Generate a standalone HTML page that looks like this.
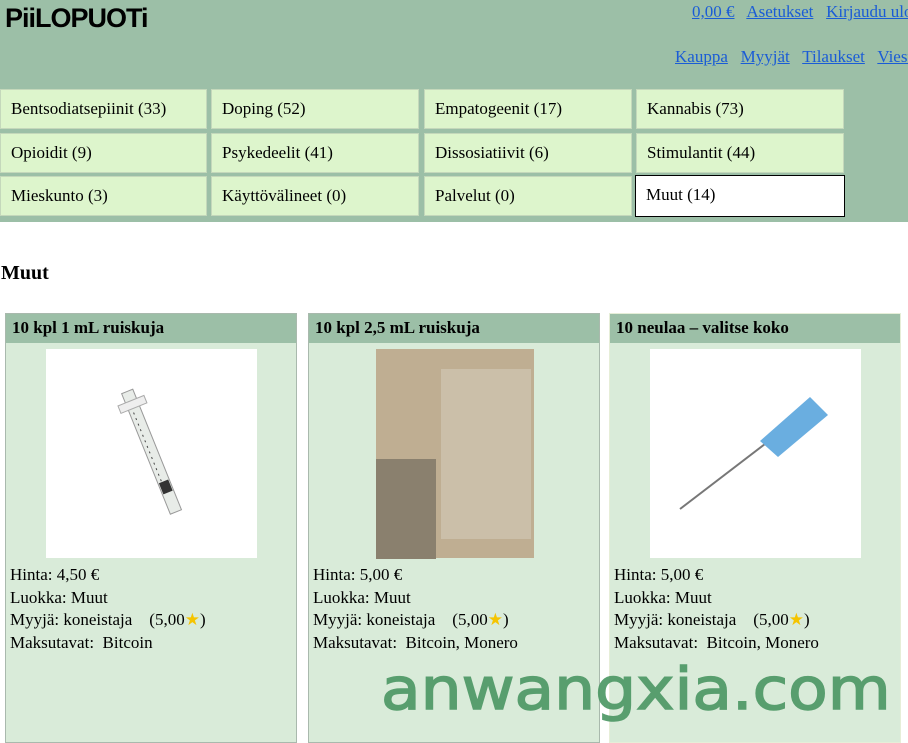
<!DOCTYPE html>
<html><head><meta charset="utf-8"><style>
body{margin:0;width:908px;height:733px;overflow:hidden;background:#fff;font-family:"Liberation Serif",serif;font-size:17px;color:#000;position:relative}
.hdr{position:absolute;left:0;top:0;width:908px;height:222px;background:#9cbfa7}
.logo{position:absolute;left:5px;top:3px;font-family:"Liberation Sans",sans-serif;font-weight:bold;font-size:27px;letter-spacing:-1px}
a{color:#1a5cd6;text-decoration:underline}
.top{position:absolute;top:2px;left:692px;white-space:nowrap;font-size:17px}
.nav{position:absolute;top:47px;left:675px;white-space:nowrap;font-size:17px}
.cat{position:absolute;background:#ddf5cc;border:1px solid #c4d8bb;box-sizing:border-box;height:40px;line-height:38px;padding-left:10px;width:208px}
.sel{background:#fff;border:1px solid #000}
h2{position:absolute;left:1px;top:262px;margin:0;font-size:20px}
.card{position:absolute;top:313px;width:292px;height:430px;background:#d9ebd9;border:1px solid #a9b9ad;box-sizing:border-box}
.ch{height:29px;background:#9cbfa7;font-weight:bold;line-height:28px;padding-left:6px}
.img{position:absolute;top:35px;left:40px;width:211px;height:209px;background:#fff}
.info{position:absolute;top:250px;left:4px;line-height:22.5px}
.wm{position:absolute;left:381px;top:655px;font-family:"DejaVu Sans",sans-serif;font-size:58px;color:#4e9866;-webkit-text-stroke:1.5px #4e9866;transform:scaleX(1.115);transform-origin:left;opacity:.92;white-space:nowrap}
</style></head><body>
<div class="hdr">
<div class="logo">PiiLOPUOTi</div>
<div class="top"><a>0,00 €</a>&nbsp;&nbsp; <a>Asetukset</a>&nbsp;&nbsp; <a>Kirjaudu ulos</a></div>
<div class="nav"><a>Kauppa</a>&nbsp;&nbsp; <a>Myyjät</a>&nbsp;&nbsp; <a>Tilaukset</a>&nbsp;&nbsp; <a>Viestit</a></div>
</div>
<div class="cat" style="left:0;top:89px;width:207px">Bentsodiatsepiinit (33)</div>
<div class="cat" style="left:211px;top:89px">Doping (52)</div>
<div class="cat" style="left:424px;top:89px">Empatogeenit (17)</div>
<div class="cat" style="left:636px;top:89px">Kannabis (73)</div>
<div class="cat" style="left:0;top:133px;width:207px">Opioidit (9)</div>
<div class="cat" style="left:211px;top:133px">Psykedeelit (41)</div>
<div class="cat" style="left:424px;top:133px">Dissosiatiivit (6)</div>
<div class="cat" style="left:636px;top:133px">Stimulantit (44)</div>
<div class="cat" style="left:0;top:176px;width:207px">Mieskunto (3)</div>
<div class="cat" style="left:211px;top:176px">Käyttövälineet (0)</div>
<div class="cat" style="left:424px;top:176px">Palvelut (0)</div>
<div class="cat sel" style="left:635px;top:175px;height:42px;width:210px">Muut (14)</div>
<h2>Muut</h2>
<div class="card" style="left:5px"><div class="ch">10 kpl 1 mL ruiskuja</div>
<div class="img"><svg width="211" height="209"><g transform="rotate(-22 105 104)"><rect x="100" y="38" width="12" height="130" fill="#e8ece8" stroke="#999"/><rect x="92" y="48" width="28" height="8" fill="#eee" stroke="#aaa"/><rect x="101" y="135" width="10" height="12" fill="#333"/><line x1="104" y1="60" x2="104" y2="135" stroke="#444" stroke-dasharray="2 4"/></g></svg></div>
<div class="info">Hinta: 4,50 €<br>Luokka: Muut<br>Myyjä: koneistaja &nbsp;&nbsp; (5,00<span style="color:#f5c400">★</span>)<br>Maksutavat:&nbsp; Bitcoin</div></div>
<div class="card" style="left:308px"><div class="ch">10 kpl 2,5 mL ruiskuja</div>
<div class="img" style="left:67px;width:158px;background:#bfae92"><div style="position:absolute;left:0;top:110px;width:60px;height:100px;background:#8a806e"></div><div style="position:absolute;left:65px;top:20px;width:90px;height:170px;background:#cbbfa9"></div></div>
<div class="info">Hinta: 5,00 €<br>Luokka: Muut<br>Myyjä: koneistaja &nbsp;&nbsp; (5,00<span style="color:#f5c400">★</span>)<br>Maksutavat:&nbsp; Bitcoin, Monero</div></div>
<div class="card" style="left:609px;border-color:#e6eed8"><div class="ch">10 neulaa – valitse koko</div>
<div class="img"><svg width="211" height="209"><line x1="30" y1="160" x2="115" y2="95" stroke="#777" stroke-width="2"/><polygon points="110,92 160,48 178,66 128,108" fill="#6aaee0"/></svg></div>
<div class="info">Hinta: 5,00 €<br>Luokka: Muut<br>Myyjä: koneistaja &nbsp;&nbsp; (5,00<span style="color:#f5c400">★</span>)<br>Maksutavat:&nbsp; Bitcoin, Monero</div></div>
<div class="wm">anwangxia.com</div>
</body></html>
